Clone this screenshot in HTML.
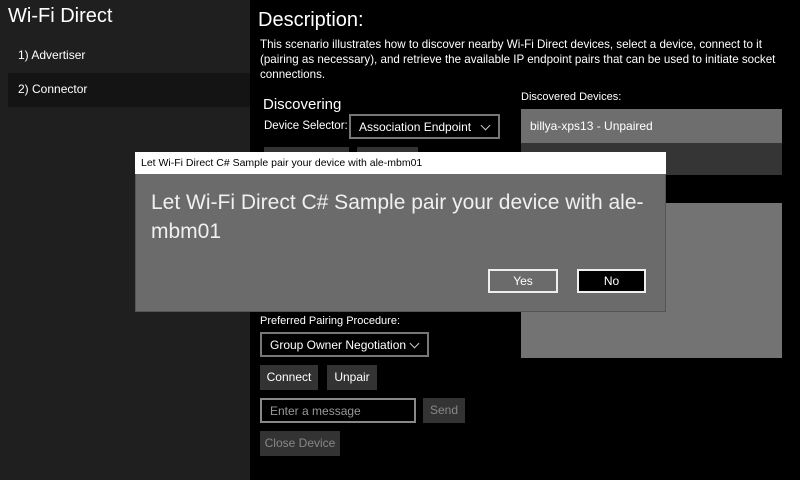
<!DOCTYPE html>
<html><head><meta charset="utf-8"><style>
*{margin:0;padding:0;box-sizing:border-box}
body{width:800px;height:480px;background:#000;font-family:"Liberation Sans",sans-serif;color:#fff;position:relative;overflow:hidden}
.a{position:absolute;white-space:nowrap}
.left{left:0;top:0;width:250px;height:480px;background:#1f1f1f}
.btn{position:absolute;background:#333;color:#fff;font-size:12px;text-align:center}
.chev{display:inline-block;width:7px;height:7px;border-right:1px solid #ccc;border-bottom:1px solid #ccc;transform:rotate(45deg)}
</style></head><body>
<div class="a left"></div>
<div class="a" style="left:8px;top:5px;font-size:20px">Wi-Fi Direct</div>
<div class="a" style="left:18px;top:48px;font-size:12px">1) Advertiser</div>
<div class="a" style="left:8px;top:73px;width:242px;height:34px;background:#141414"></div>
<div class="a" style="left:18px;top:82px;font-size:12px">2) Connector</div>

<div class="a" style="left:258px;top:9px;font-size:20px">Description:</div>
<div class="a" style="left:260px;top:37px;font-size:11.6px;line-height:15px;white-space:normal;width:532px">This scenario illustrates how to discover nearby Wi-Fi Direct devices, select a device, connect to it (pairing as necessary), and retrieve the available IP endpoint pairs that can be used to initiate socket connections.</div>
<div class="a" style="left:263px;top:96px;font-size:15px">Discovering</div>
<div class="a" style="left:264px;top:120px;font-size:11.5px">Device Selector:</div>
<div class="a" style="left:349px;top:114px;width:151px;height:25px;border:2px solid #777;font-size:12px;padding:4px 0 0 8px">Association Endpoint<span class="chev" style="position:absolute;right:9px;top:6px"></span></div>
<div class="btn" style="left:264px;top:147px;width:85px;height:10px"></div>
<div class="btn" style="left:357px;top:147px;width:61px;height:10px"></div>

<div class="a" style="left:521px;top:91px;font-size:11px">Discovered Devices:</div>
<div class="a" style="left:521px;top:109px;width:261px;height:34px;background:#6e6e6e;font-size:12px;padding:10px 0 0 9px">billya-xps13 - Unpaired</div>
<div class="a" style="left:521px;top:143px;width:261px;height:32px;background:#353535"></div>
<div class="a" style="left:521px;top:203px;width:261px;height:155px;background:#737373"></div>

<div class="a" style="left:260px;top:315px;font-size:11px">Preferred Pairing Procedure:</div>
<div class="a" style="left:260px;top:332px;width:169px;height:25px;border:2px solid #777;font-size:12px;padding:4px 0 0 8px">Group Owner Negotiation<span class="chev" style="position:absolute;right:9px;top:6px"></span></div>
<div class="btn" style="left:260px;top:365px;width:58px;height:25px;line-height:25px">Connect</div>
<div class="btn" style="left:327px;top:365px;width:50px;height:25px;line-height:25px">Unpair</div>
<div class="a" style="left:260px;top:398px;width:156px;height:25px;border:2px solid #888;font-size:12px;color:#999;padding:4px 0 0 8px">Enter a message</div>
<div class="btn" style="left:423px;top:398px;width:42px;height:25px;line-height:25px;color:#888">Send</div>
<div class="btn" style="left:260px;top:431px;width:80px;height:25px;line-height:25px;color:#888">Close Device</div>

<div class="a" style="left:135px;top:152px;width:531px;height:160px;background:#6b6b6b;border:1px solid #555"></div>
<div class="a" style="left:135px;top:152px;width:531px;height:22px;background:#fff;color:#000;font-size:10.5px;padding:5px 0 0 6px">Let Wi-Fi Direct C# Sample pair your device with ale-mbm01</div>
<div class="a" style="left:151px;top:188px;font-size:21px;line-height:29px;color:#f0f0f0">Let Wi-Fi Direct C# Sample pair your device with ale-<br>mbm01</div>
<div class="a" style="left:488px;top:269px;width:70px;height:24px;border:2px solid #eee;background:#6b6b6b;font-size:12px;text-align:center;line-height:20px">Yes</div>
<div class="a" style="left:577px;top:269px;width:69px;height:24px;border:2px solid #eee;background:#000;font-size:12px;text-align:center;line-height:20px">No</div>
</body></html>
